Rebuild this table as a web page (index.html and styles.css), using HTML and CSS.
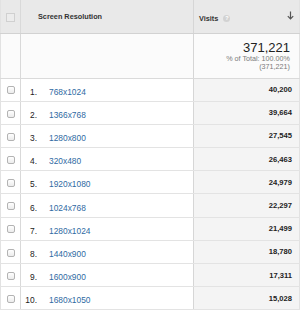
FILE: index.html
```html
<!DOCTYPE html>
<html>
<head>
<meta charset="utf-8">
<link rel="stylesheet" href="styles.css">
</head>
<body>
<table class="report">
  <colgroup>
    <col class="col-check">
    <col class="col-dim">
    <col class="col-val">
  </colgroup>
  <thead>
    <tr class="head">
      <th class="c-check"><span class="cb cb-head"></span></th>
      <th class="c-dim">Screen Resolution</th>
      <th class="c-val">
        <div class="vh">
          <span class="vh-label">Visits <span class="help">?</span></span>
          <svg class="sort" width="7" height="9" viewBox="0 0 7 9"><path d="M3.5 0.5V8M0.8 5.2L3.5 8L6.2 5.2" fill="none" stroke="#555" stroke-width="1.2"/></svg>
        </div>
      </th>
    </tr>
    <tr class="total">
      <td class="c-check"></td>
      <td class="c-dim"></td>
      <td class="c-val">
        <div class="big">371,221</div>
        <div class="sub">% of Total: 100.00%</div>
        <div class="sub">(371,221)</div>
      </td>
    </tr>
  </thead>
  <tbody>
    <tr><td class="c-check"><span class="cb"></span></td><td class="c-dim"><span class="idx">1.</span><a class="lnk">768x1024</a></td><td class="c-val num">40,200</td></tr>
    <tr><td class="c-check"><span class="cb"></span></td><td class="c-dim"><span class="idx">2.</span><a class="lnk">1366x768</a></td><td class="c-val num">39,664</td></tr>
    <tr><td class="c-check"><span class="cb"></span></td><td class="c-dim"><span class="idx">3.</span><a class="lnk">1280x800</a></td><td class="c-val num">27,545</td></tr>
    <tr><td class="c-check"><span class="cb"></span></td><td class="c-dim"><span class="idx">4.</span><a class="lnk">320x480</a></td><td class="c-val num">26,463</td></tr>
    <tr><td class="c-check"><span class="cb"></span></td><td class="c-dim"><span class="idx">5.</span><a class="lnk">1920x1080</a></td><td class="c-val num">24,979</td></tr>
    <tr><td class="c-check"><span class="cb"></span></td><td class="c-dim"><span class="idx">6.</span><a class="lnk">1024x768</a></td><td class="c-val num">22,297</td></tr>
    <tr><td class="c-check"><span class="cb"></span></td><td class="c-dim"><span class="idx">7.</span><a class="lnk">1280x1024</a></td><td class="c-val num">21,499</td></tr>
    <tr><td class="c-check"><span class="cb"></span></td><td class="c-dim"><span class="idx">8.</span><a class="lnk">1440x900</a></td><td class="c-val num">18,780</td></tr>
    <tr><td class="c-check"><span class="cb"></span></td><td class="c-dim"><span class="idx">9.</span><a class="lnk">1600x900</a></td><td class="c-val num">17,311</td></tr>
    <tr><td class="c-check"><span class="cb"></span></td><td class="c-dim"><span class="idx">10.</span><a class="lnk">1680x1050</a></td><td class="c-val num">15,028</td></tr>
  </tbody>
</table>
</body>
</html>
```
FILE: styles.css
```css
html, body {
  margin: 0;
  padding: 0;
  background: #ffffff;
}
body {
  font-family: "Liberation Sans", Arial, sans-serif;
  color: #222;
  width: 300px;
  height: 312px;
  overflow: hidden;
}
.report {
  width: 300px;
  border-collapse: collapse;
  table-layout: fixed;
  border-left: 1px solid #e2e2e2;
  border-right: 1px solid #e2e2e2;
}
.col-check { width: 20px; }
.col-dim { width: 173px; }
.col-val { width: auto; }
.report td, .report th {
  padding: 0;
  box-sizing: border-box;
  vertical-align: middle;
}
.c-check {
  border-right: 1px solid #d9d9d9;
  text-align: center;
}
.c-dim {
  border-right: 1px solid #d6d6d6;
  text-align: left;
}
.c-val {
  text-align: right;
}
.head th {
  height: 33px;
  background: #e9e9e9;
  border-bottom: 1px solid #d2d2d2;
  font-weight: bold;
  font-size: 7.3px;
  color: #333;
}
.head .c-dim {
  padding-left: 17px;
}
.head .c-val {
  padding: 0 5px 0 5px;
}
.vh {
  display: flex;
  align-items: center;
  justify-content: space-between;
}
.vh-label {
  display: flex;
  align-items: center;
  gap: 5px;
  padding-top: 4px;
}
.help {
  display: inline-flex;
  align-items: center;
  justify-content: center;
  width: 7px;
  height: 7px;
  border-radius: 50%;
  background: #d2d2d2;
  color: #fff;
  font-size: 5.5px;
  font-weight: bold;
}
.sort {
  display: block;
  margin-top: -2px;
}
.cb {
  display: inline-block;
  box-sizing: border-box;
  width: 8px;
  height: 8px;
  border: 1px solid #b3b3b3;
  border-radius: 2px;
  background: linear-gradient(#ffffff, #ececec);
  vertical-align: middle;
}
.cb-head {
  width: 9px;
  height: 9px;
  border-color: #d0d0d0;
  border-radius: 0;
  background: #ececec;
  margin-top: 2px;
}
.total td {
  height: 45px;
  background: #fbfbfb;
  border-bottom: 1px solid #dadada;
}
.total .c-val {
  padding-right: 9px;
  padding-top: 1px;
}
.big {
  font-size: 13px;
  line-height: 14px;
  color: #222;
}
.sub {
  font-size: 7.2px;
  line-height: 8.5px;
  color: #7a7a7a;
}
tbody td {
  height: 23.2px;
  border-bottom: 1px solid #e3e3e3;
}
tbody .c-val {
  background: #f4f4f4;
}
.idx {
  display: inline-block;
  width: 16px;
  text-align: right;
  font-size: 8.4px;
  color: #222;
}
.lnk {
  margin-left: 12px;
  font-size: 8.4px;
  color: #2f6aa3;
  text-decoration: none;
}
.report .num {
  font-size: 7.6px;
  font-weight: bold;
  color: #222;
  padding-right: 7px;
}
```
